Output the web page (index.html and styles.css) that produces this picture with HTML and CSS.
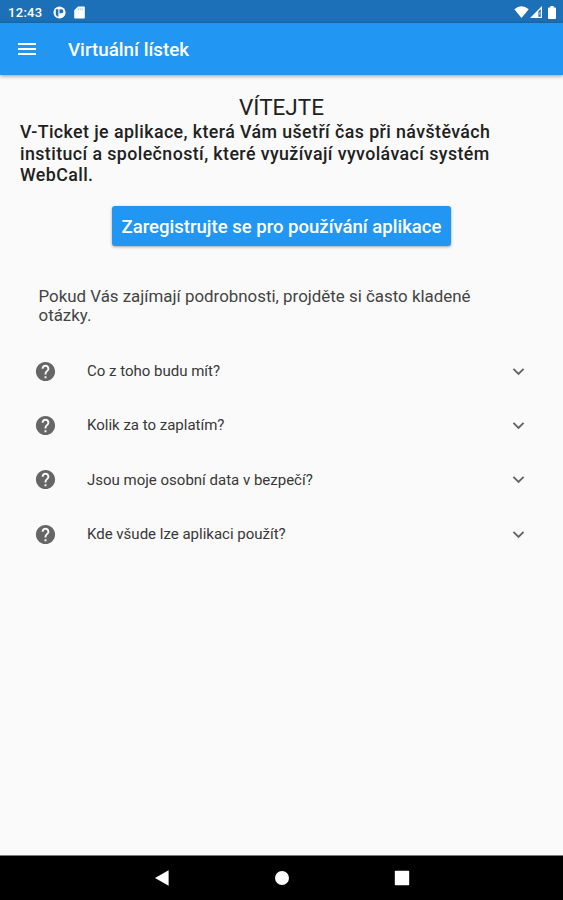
FILE: index.html
```html
<!DOCTYPE html>
<html lang="cs">

<head>
    <meta charset="utf-8">
    <meta name="viewport" content="width=device-width, initial-scale=1.0">
    <title>Virtuální lístek</title>

    <link rel="stylesheet" href="styles.css">
</head>

<body>
    <svg class="sprite">
        <symbol id="help" viewBox="0 0 24 24">
            <path d="M12 2C6.48 2 2 6.48 2 12s4.48 10 10 10 10-4.48 10-10S17.52 2 12 2zm1 17h-2v-2h2v2zm2.07-7.75l-.9.92C13.45 12.9 13 13.5 13 15h-2v-.5c0-1.1.45-2.1 1.17-2.83l1.24-1.26c.37-.36.59-.86.59-1.41 0-1.1-.9-2-2-2s-2 .9-2 2H8c0-2.21 1.79-4 4-4s4 1.79 4 4c0 .88-.36 1.68-.93 2.25z" />
        </symbol>
        <symbol id="expand" viewBox="0 0 24 24">
            <path d="M16.59 8.59L12 13.17 7.41 8.59 6 10l6 6 6-6z" />
        </symbol>
    </svg>

    <div class="status">
        <span class="time">12:43</span>
        <svg class="app_icon" viewBox="0 0 14 14">
            <circle cx="7" cy="7" r="6.5" fill="#fff" />
            <path d="M3 3.4h2.8v7.8H4.4A5 5 0 0 1 3 9zM7 3.4h2a2.2 2.2 0 0 1 0 4.4H7z" fill="#1b70b7" />
        </svg>
        <svg class="sd" viewBox="0 0 11 13">
            <path d="M4 .5h6q.8 0 .8.8v10.4q0 .8-.8.8H1q-.8 0-.8-.8V4.3z" fill="#fff" />
            <path d="M4.2 2.2v2M6.2 2.2v2M8.2 2.2v2" stroke="#8db9de" stroke-width=".8" />
        </svg>
        <svg class="wifi" viewBox="0 0 15 12">
            <path d="M.3 3.2Q7.5-2.6 14.7 3.2L7.5 12z" fill="#fff" />
        </svg>
        <svg class="signal" viewBox="0 0 12 12">
            <path d="M0 12L12 0v12z" fill="#fff" />
            <path d="M8.4 5.4l2.4-2.4v7.8H8.4z" fill="#1b70b7" />
            <path d="M9.3 6h.9v3h-.9z" fill="#fff" fill-opacity=".6" />
        </svg>
        <svg class="battery" viewBox="0 0 8 13">
            <path d="M2.3 0h3.4v1.4H7q1 0 1 1V12q0 1-1 1H1q-1 0-1-1V2.4q0-1 1-1h1.3z" fill="#fff" />
        </svg>
    </div>

    <header>
        <svg class="menu" viewBox="0 0 18 12">
            <path d="M0 0h18v2H0zM0 5h18v2H0zM0 10h18v2H0z" fill="#fff" />
        </svg>
        <h1>Virtuální lístek</h1>
    </header>

    <main>
        <h2>VÍTEJTE</h2>
        <p class="intro">V-Ticket je aplikace, která Vám ušetří čas při návštěvách<br>institucí a společností, které využívají vyvolávací systém<br>WebCall.</p>
        <button>Zaregistrujte se pro používání aplikace</button>

        <p class="info">Pokud Vás zajímají podrobnosti, projděte si často kladené<br>otázky.</p>

        <ul>
            <li>
                <svg class="help"><use href="#help" /></svg>
                <span>Co z toho budu mít?</span>
                <svg class="expand"><use href="#expand" /></svg>
            </li>
            <li>
                <svg class="help"><use href="#help" /></svg>
                <span>Kolik za to zaplatím?</span>
                <svg class="expand"><use href="#expand" /></svg>
            </li>
            <li>
                <svg class="help"><use href="#help" /></svg>
                <span>Jsou moje osobní data v bezpečí?</span>
                <svg class="expand"><use href="#expand" /></svg>
            </li>
            <li>
                <svg class="help"><use href="#help" /></svg>
                <span>Kde všude lze aplikaci použít?</span>
                <svg class="expand"><use href="#expand" /></svg>
            </li>
        </ul>
    </main>

    <nav>
        <svg viewBox="0 0 16 16"><path d="M1 8L14.6.3v15.4z" /></svg>
        <svg viewBox="0 0 16 16"><circle cx="8" cy="8" r="7" /></svg>
        <svg viewBox="0 0 16 16"><rect x=".8" y=".8" width="14.4" height="14.4" rx=".8" /></svg>
    </nav>
</body>

</html>
```
FILE: styles.css
```css
* {
    box-sizing: border-box;
}

body {
    display: flex;
    flex-direction: column;
    height: 100vh;
    margin: 0;
    overflow: hidden;
    background-color: #fafafa;
    color: #212121;
    font-family: Roboto, sans-serif;
}

h1,
h2,
p,
ul {
    margin: 0;
    padding: 0;
}

svg {
    display: block;
    flex: none;
}

.sprite {
    display: none;
}


/* status bar */

.status {
    display: flex;
    align-items: center;
    flex: none;
    height: 23px;
    padding: 1px 7px 0 8px;
    background-color: #1b70b7;
    color: #fff;
}

.time {
    width: 45px;
    font-size: 13px;
    font-weight: 500;
    letter-spacing: 0.3px;
}

.app_icon {
    width: 13px;
    height: 13px;
}

.sd {
    width: 11px;
    height: 13px;
    margin-left: 8px;
}

.wifi {
    width: 15px;
    height: 12px;
    margin-left: auto;
}

.signal {
    width: 12px;
    height: 12px;
    margin-left: 1px;
}

.battery {
    width: 8px;
    height: 13px;
    margin-left: 6px;
}


/* app bar */

header {
    display: flex;
    align-items: center;
    flex: none;
    height: 52px;
    padding-left: 18px;
    background-color: #2196f3;
    color: #fff;
    box-shadow: 0 1px 4px rgba(0, 0, 0, 0.4);
}

.menu {
    width: 18px;
    height: 12px;
    margin-right: 32px;
}

h1 {
    padding-top: 2px;
    font-size: 18.8px;
    font-weight: 500;
    line-height: 22px;
}


main {
    display: flex;
    flex-direction: column;
    flex: 1;
    padding: 19px 20px 0;
    white-space: nowrap;
}

h2 {
    font-size: 22.5px;
    font-weight: 400;
    line-height: 26px;
    text-align: center;
}

.intro {
    margin-top: 1px;
    font-size: 17.8px;
    font-weight: 500;
    letter-spacing: 0.42px;
    line-height: 21.5px;
}

button {
    align-self: center;
    width: 339px;
    height: 40px;
    margin-top: 20.5px;
    padding: 2px 0 0;
    border: none;
    border-radius: 3px;
    background-color: #2196f3;
    box-shadow: 0 1px 3px rgba(0, 0, 0, 0.35);
    color: #fff;
    font-family: inherit;
    font-size: 18.55px;
    font-weight: 500;
}

.info {
    margin: 40.5px 0 0 18.5px;
    color: #444;
    font-size: 16.9px;
    line-height: 19px;
}


/* questions */

ul {
    margin-top: 19.4px;
    list-style: none;
}

li {
    display: flex;
    align-items: center;
    height: 54.4px;
    padding: 0 13px 0 14px;
}

li span {
    flex: 1;
    margin-left: 30px;
    color: #383838;
    font-size: 15px;
}

.help,
.expand {
    width: 23px;
    height: 23px;
    fill: #666;
}


/* system buttons */

nav {
    display: flex;
    justify-content: center;
    gap: 104px;
    align-items: center;
    flex: none;
    height: 45px;
    border-top: 1px solid #777;
    background-color: #000;
}

nav svg {
    width: 16px;
    height: 16px;
    fill: #fff;
}
```
